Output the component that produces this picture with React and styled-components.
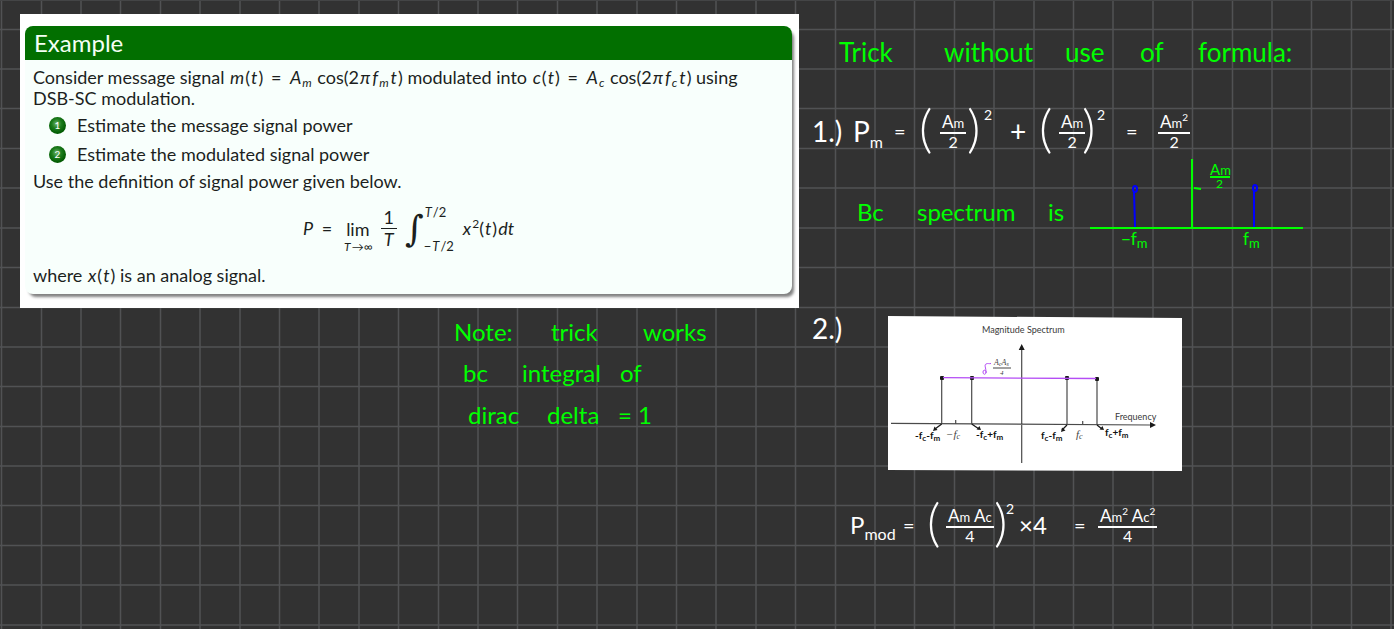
import React from 'react';
import styled, { createGlobalStyle } from 'styled-components';

const INK = { green: '#00ff00', white: '#ffffff' };

const GlobalStyle = createGlobalStyle`
  * { box-sizing: border-box; }
  body {
    margin: 0;
    background: #323232;
    font-family: Lato, "Open Sans", sans-serif;
  }
`;

const Board = styled.main`
  position: relative;
  min-height: 100vh;
  overflow: hidden;
  display: grid;
  grid-template-columns: 799fr 595fr;
`;

const GridPaper = styled.svg`
  position: absolute;
  inset: 0;
  width: 100%;
  height: 100%;
`;

const LeftPage = styled.div`
  position: relative;
  display: flex;
  flex-direction: column;
  padding: 14px 0 0 20px;
`;

const RightPage = styled.div`
  position: relative;
  display: flex;
  flex-direction: column;
  padding: 32px 0 0 13px;
`;

/* Lecture slide */

const Slide = styled.section`
  background: #ffffff;
  padding: 12px 7px 14px 5px;
  color: #1c1f1e;
`;

const Block = styled.div`
  border-radius: 8px;
  background: #f8fffc;
  box-shadow: 3px 4px 3px -1px rgba(0, 0, 0, 0.5);
`;

const BlockTitle = styled.h1`
  margin: 0;
  padding: 0 9px;
  height: 34px;
  border-radius: 8px 8px 0 0;
  background: #026f00;
  color: #f4fff4;
  font-size: 24px;
  font-weight: 400;
  line-height: 34px;
`;

const BlockBody = styled.div`
  padding: 7px 8px 8px;
  font-size: 18px;
  line-height: 21px;
`;

const Paragraph = styled.p`
  margin: 0;
`;

const Steps = styled.ol`
  list-style: none;
  margin: 6px 0;
  padding: 0 0 0 16px;
  display: flex;
  flex-direction: column;
  gap: 8px;
`;

const Step = styled.li`
  display: flex;
  align-items: center;
  gap: 11px;
`;

const Ball = styled.span`
  width: 17px;
  height: 17px;
  border-radius: 50%;
  background: radial-gradient(circle at 45% 40%, #6fb56f 0, #1d7d1d 35%, #015a01 70%, #013a01 100%);
  color: #ffffff;
  font-size: 10px;
  line-height: 17px;
  text-align: center;
`;

const V = styled.i`
  margin: 0 1px;
  font-style: italic;
`;

const Equals = styled.span`
  margin: 0 3px;
`;

const Low = styled.sub`
  margin-right: 1px;
  font-size: 12px;
  line-height: 1px;
  vertical-align: -3px;
  font-style: italic;
`;

const High = styled.sup`
  font-size: 12px;
  line-height: 1px;
  vertical-align: 7px;
`;

const Formula = styled.div`
  height: 73px;
  display: flex;
  align-items: center;
  justify-content: center;
  gap: 8px;
`;

const Limit = styled.span`
  display: flex;
  flex-direction: column;
  align-items: center;
  padding-top: 14px;
`;

const LimitWord = styled.span`
  line-height: 22px;
`;

const LimitRange = styled.span`
  font-size: 12px;
  line-height: 14px;
`;

const Ratio = styled.span`
  display: flex;
  flex-direction: column;
  align-items: center;
`;

const RatioTop = styled.span`
  padding: 0 3px;
  border-bottom: 1px solid #1c1f1e;
`;

const Integral = styled.span`
  display: flex;
  align-items: center;
`;

const IntegralSign = styled.span`
  font-family: "DejaVu Serif", serif;
  font-size: 36px;
  line-height: 44px;
`;

const Bounds = styled.span`
  display: flex;
  flex-direction: column;
  gap: 14px;
  font-size: 13px;
  line-height: 20px;
`;

/* Pen notes */

const Line = styled.div`
  display: grid;
  grid-template-columns: ${(p) => p.$cols};
  grid-template-rows: 100%;
  align-items: center;
  height: ${(p) => p.$h}px;
  margin: ${(p) => p.$m || '0'};
  color: ${(p) => INK[p.$ink || 'green']};
  font-size: ${(p) => p.$size || 24}px;
  font-weight: 400;
  line-height: 1;
  white-space: nowrap;
`;

const Note = styled.section`
  margin: 4px 0 0 434px;
`;

const Sub = styled.sub`
  font-size: 16px;
  line-height: 1px;
  vertical-align: -6px;
`;

const Power = styled.span`
  align-self: start;
  padding-top: 2px;
  font-size: 14px;
`;

const Bracket = styled.span`
  padding-bottom: 8px;
  font-size: 52px;
  font-weight: 300;
`;

const Sign = styled.span`
  font-size: 20px;
`;

const Fraction = styled.span`
  display: inline-flex;
  flex-direction: column;
  align-items: center;
  justify-self: start;
  font-size: 17px;
`;

const Over = styled.span`
  padding: 0 2px 2px;
  border-bottom: 2px solid currentColor;
`;

const Under = styled.span`
  font-size: 16px;
`;

const Small = styled.small`
  font-size: 13px;
`;

const Tiny = styled.sup`
  font-size: 10px;
  line-height: 1px;
`;

const SketchRow = styled.div`
  display: flex;
  margin-top: 2px;
`;

const Plot = styled.svg`
  display: block;
  flex: none;
  overflow: visible;
`;

const FigureRow = styled.div`
  display: flex;
  align-items: flex-start;
  margin-top: 56px;
`;

const Figure = styled.figure`
  margin: 8px 0 0;
`;

function LectureSlide() {
  return (
    <Slide>
      <Block>
        <BlockTitle>Example</BlockTitle>
        <BlockBody>
          <Paragraph>
            Consider message signal <V>m</V>(<V>t</V>) <Equals>=</Equals> <V>A</V><Low>m</Low> cos(2<V>π</V><V>f</V><Low>m</Low><V>t</V>) modulated
            into <V>c</V>(<V>t</V>) <Equals>=</Equals> <V>A</V><Low>c</Low> cos(2<V>π</V><V>f</V><Low>c</Low><V>t</V>) using
            <br />
            DSB-SC modulation.
          </Paragraph>
          <Steps>
            <Step><Ball>1</Ball>Estimate the message signal power</Step>
            <Step><Ball>2</Ball>Estimate the modulated signal power</Step>
          </Steps>
          <Paragraph>Use the definition of signal power given below.</Paragraph>
          <Formula>
            <span><V>P</V> <Equals>=</Equals></span>
            <Limit>
              <LimitWord>lim</LimitWord>
              <LimitRange><V>T</V>→∞</LimitRange>
            </Limit>
            <Ratio>
              <RatioTop>1</RatioTop>
              <V>T</V>
            </Ratio>
            <Integral>
              <IntegralSign>∫</IntegralSign>
              <Bounds>
                <span><V>T</V>/2</span>
                <span>−<V>T</V>/2</span>
              </Bounds>
            </Integral>
            <span><V>x</V><High>2</High>(<V>t</V>)<V>dt</V></span>
          </Formula>
          <Paragraph>where <V>x</V>(<V>t</V>) is an analog signal.</Paragraph>
        </BlockBody>
      </Block>
    </Slide>
  );
}

function BasebandPlot() {
  return (
    <Plot width="214" height="94" viewBox="0 0 214 94" role="img" aria-label="Baseband spectrum">
      <g stroke="#00ff00" strokeWidth="2" fill="none">
        <path d="M0 70H213M102 1V70M104 30l7 1" />
        <path d="M120 19H140" />
      </g>
      <g stroke="#0000ff" strokeWidth="2" fill="none">
        <path d="M44 33l1 36M164 33V69" />
        <ellipse cx="45" cy="31" rx="2" ry="3" />
        <ellipse cx="165" cy="30" rx="2" ry="3" />
      </g>
      <g fill="#00ff00" fontSize="15">
        <text x="120" y="17">A<tspan fontSize="13">m</tspan></text>
        <text x="126" y="30" fontSize="12">2</text>
        <text x="31" y="87" fontSize="17">−f<tspan fontSize="13" dy="3">m</tspan></text>
        <text x="153" y="87" fontSize="17">f<tspan fontSize="13" dy="3">m</tspan></text>
      </g>
    </Plot>
  );
}

function MagnitudePlot() {
  return (
    <Plot width="294" height="156" viewBox="0 0 294 156" role="img" aria-label="Magnitude spectrum">
      <path d="M0 0L294 2V155L0 154Z" fill="#ffffff" />
      <g stroke="#4a4a4a" strokeWidth="1.2" fill="none">
        <path d="M3 107.3L262 109M133.7 34V147" />
        <path d="M53.7 62V108M83.7 62V108M179 62V109M209 63V109" />
        <path d="M67.7 104V108M194.7 105V109" />
      </g>
      <g fill="#1a1a1a">
        <path d="M133.7 28l3 6h-6zM268 109l-6 3v-6z" />
        <rect x="52" y="60" width="4" height="4" rx="1" />
        <rect x="82" y="60" width="4" height="4" rx="1" />
        <rect x="177" y="60" width="4" height="4" rx="1" />
        <rect x="207" y="61" width="4" height="4" rx="1" />
        <path d="M45 115l1.500-4.500 3 3.500zM93 114l-4.500-.5 3-3.500zM173 116l1-4.500 3.500 3zM216 114l-4.500-.5 3-3.500z" />
      </g>
      <path
        d="M53.700 108L47 113M83.700 108L91 113M179 109L174 114M209 109L214 113"
        stroke="#1a1a1a" strokeWidth="1.3" fill="none"
      />
      <g stroke="#b44df5" fill="none">
        <path d="M55 61.700L208 62.500" strokeWidth="1.300" />
        <path d="M98 57c1-3-3-4-3-1s3 3 3 0c0-4-2-7 0-8 2-1 3 0 5-.5" />
      </g>
      <g fill="#3a3a3a">
        <text x="94" y="17" fontSize="9">Magnitude Spectrum</text>
        <text x="227" y="104" fontSize="9">Frequency</text>
      </g>
      <g fill="#444444" fontFamily="Liberation Serif, serif" fontStyle="italic">
        <text x="106" y="49" fontSize="8">A<tspan fontSize="6" dy="1">c</tspan><tspan dy="-1">A</tspan><tspan fontSize="6" dy="1">s</tspan></text>
        <path d="M105 52H123" stroke="#444444" />
        <text x="112" y="59" fontSize="7">4</text>
        <text x="58" y="122" fontSize="11">−f<tspan fontSize="8" dy="1">c</tspan></text>
        <text x="188" y="122" fontSize="11">f<tspan fontSize="8" dy="1">c</tspan></text>
      </g>
      <g fill="#111111" fontSize="10" fontWeight="700">
        <text x="27" y="123">-f<tspan fontSize="8" dy="2">c</tspan><tspan dy="-2">-f</tspan><tspan fontSize="8" dy="2">m</tspan></text>
        <text x="88" y="122">-f<tspan fontSize="8" dy="2">c</tspan><tspan dy="-2">+f</tspan><tspan fontSize="8" dy="2">m</tspan></text>
        <text x="153" y="123">f<tspan fontSize="8" dy="2">c</tspan><tspan dy="-2">-f</tspan><tspan fontSize="8" dy="2">m</tspan></text>
        <text x="217" y="120">f<tspan fontSize="8" dy="2">c</tspan><tspan dy="-2">+f</tspan><tspan fontSize="8" dy="2">m</tspan></text>
      </g>
    </Plot>
  );
}

export default function App() {
  return (
    <>
      <GlobalStyle />
      <Board>
        <GridPaper aria-hidden="true">
          <defs>
            <pattern id="squares" width="397" height="397" patternUnits="userSpaceOnUse">
              <path
                d="M1.500 0V397M41.500 0V397M81 0V397M120.500 0V397M160.500 0V397M200 0V397M240 0V397M279.500 0V397M319 0V397M359 0V397"
                stroke="#515254" strokeWidth="1.500"
              />
              <path
                d="M0 29.500H397M0 69H397M0 108.500H397M0 148.500H397M0 188H397M0 228H397M0 267.500H397M0 307.500H397M0 347H397M0 386.500H397"
                stroke="#515254" strokeWidth="1.500"
              />
            </pattern>
          </defs>
          <rect width="100%" height="100%" fill="url(#squares)" />
          <path d="M0 0.500H4000" stroke="#444546" />
        </GridPaper>

        <LeftPage>
          <LectureSlide />
          <Note>
            <Line $cols="97px 92px auto" $h={40}>
              <span>Note:</span><span>trick</span><span>works</span>
            </Line>
            <Line $cols="59px 98px auto" $h={42} $m="0 0 0 9px">
              <span>bc</span><span>integral</span><span>of</span>
            </Line>
            <Line $cols="79px 71px auto" $h={42} $m="0 0 0 14px">
              <span>dirac</span><span>delta</span><span>= 1</span>
            </Line>
          </Note>
        </LeftPage>

        <RightPage>
          <Line $cols="105px 121px 75px 58px auto" $h={40} $m="0 0 0 27px" $size={26}>
            <span>Trick</span><span>without</span><span>use</span><span>of</span><span>formula:</span>
          </Line>

          <Line $cols="41px 41px 25px 21px 27px 17px 26px 29px 20px 23px 15px 29px 32px auto" $h={50} $m="34px 0 0 0" $ink="white" $size={28}>
            <span>1.)</span>
            <span>P<Sub>m</Sub></span>
            <Sign>=</Sign>
            <Bracket>(</Bracket>
            <Fraction><Over>A<Small>m</Small></Over><Under>2</Under></Fraction>
            <Bracket>)</Bracket>
            <Power>2</Power>
            <span>+</span>
            <Bracket>(</Bracket>
            <Fraction><Over>A<Small>m</Small></Over><Under>2</Under></Fraction>
            <Bracket>)</Bracket>
            <Power>2</Power>
            <Sign>=</Sign>
            <Fraction><Over>A<Small>m</Small><Tiny>2</Tiny></Over><Under>2</Under></Fraction>
          </Line>

          <SketchRow>
            <Line $cols="60px 131px 42px" $h={36} $m="36px 0 0 45px">
              <span>Bc</span><span>spectrum</span><span>is</span>
            </Line>
            <BasebandPlot />
          </SketchRow>

          <FigureRow>
            <Line $cols="76px" $h={40} $ink="white" $size={28}>
              <span>2.)</span>
            </Line>
            <Figure>
              <MagnitudePlot />
            </Figure>
          </FigureRow>

          <Line $cols="53px 24px 19px 48px 12px 13px 55px 24px auto" $h={50} $m="28px 0 20px 38px" $ink="white">
            <span>P<Sub>mod</Sub></span>
            <Sign>=</Sign>
            <Bracket>(</Bracket>
            <Fraction><Over>A<Small>m</Small> A<Small>c</Small></Over><Under>4</Under></Fraction>
            <Bracket>)</Bracket>
            <Power>2</Power>
            <span>×4</span>
            <Sign>=</Sign>
            <Fraction><Over>A<Small>m</Small><Tiny>2</Tiny> A<Small>c</Small><Tiny>2</Tiny></Over><Under>4</Under></Fraction>
          </Line>
        </RightPage>
      </Board>
    </>
  );
}
